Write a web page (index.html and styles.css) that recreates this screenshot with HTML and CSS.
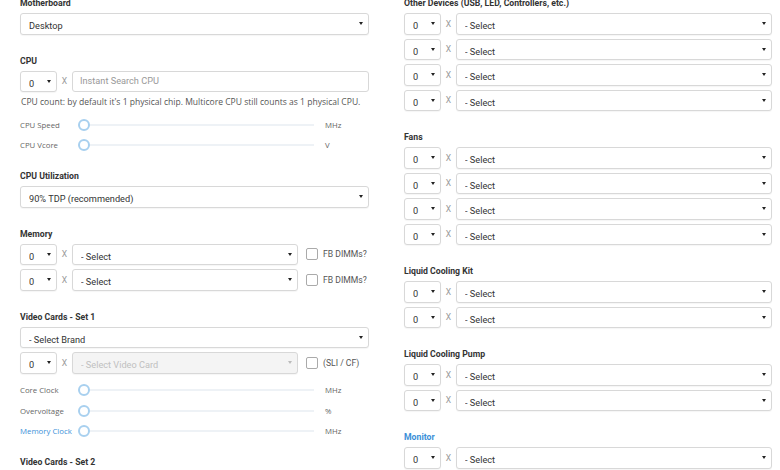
FILE: index.html
```html
<!DOCTYPE html>
<html lang="en">
<head>
  <meta charset="UTF-8">
  <title>PSU Calculator</title>
  <meta name="viewport" content="width=device-width, initial-scale=1.0">
  <link rel="stylesheet" href="styles.css">
</head>
<body>

  <div class="page">

    <div class="col col-left">

      <div class="section">
        <div class="label">Motherboard</div>
        <div class="sel"><select><option>Desktop</option></select></div>
      </div>

      <div class="section">
        <div class="label">CPU</div>
        <div class="row">
          <div class="sel qty"><select><option>0</option></select></div>
          <span class="x">X</span>
          <input class="search" type="text" placeholder="Instant Search CPU">
        </div>
        <p class="help">CPU count: by default it's 1 physical chip. Multicore CPU still counts as 1 physical CPU.</p>
        <div class="sliders">
          <div class="slider"><span class="s-label">CPU Speed</span><span class="track"><i class="knob"></i></span><span class="unit">MHz</span></div>
          <div class="slider"><span class="s-label">CPU Vcore</span><span class="track"><i class="knob"></i></span><span class="unit">V</span></div>
        </div>
      </div>

      <div class="section">
        <div class="label">CPU Utilization</div>
        <div class="sel"><select><option>90% TDP (recommended)</option></select></div>
      </div>

      <div class="section">
        <div class="label">Memory</div>
        <div class="row">
          <div class="sel qty"><select><option>0</option></select></div>
          <span class="x">X</span>
          <div class="sel grow"><select><option>- Select</option></select></div>
          <label class="check"><input type="checkbox"><span class="box"></span>FB DIMMs?</label>
        </div>
        <div class="row">
          <div class="sel qty"><select><option>0</option></select></div>
          <span class="x">X</span>
          <div class="sel grow"><select><option>- Select</option></select></div>
          <label class="check"><input type="checkbox"><span class="box"></span>FB DIMMs?</label>
        </div>
      </div>

      <div class="section">
        <div class="label">Video Cards - Set 1</div>
        <div class="row">
          <div class="sel grow"><select><option>- Select Brand</option></select></div>
        </div>
        <div class="row">
          <div class="sel qty"><select><option>0</option></select></div>
          <span class="x">X</span>
          <div class="sel grow disabled"><select disabled><option>- Select Video Card</option></select></div>
          <label class="check"><input type="checkbox"><span class="box"></span>(SLI / CF)</label>
        </div>
        <div class="sliders">
          <div class="slider"><span class="s-label">Core Clock</span><span class="track"><i class="knob"></i></span><span class="unit">MHz</span></div>
          <div class="slider"><span class="s-label">Overvoltage</span><span class="track"><i class="knob"></i></span><span class="unit">%</span></div>
          <div class="slider"><span class="s-label link">Memory Clock</span><span class="track"><i class="knob"></i></span><span class="unit">MHz</span></div>
        </div>
      </div>

      <div class="section">
        <div class="label">Video Cards - Set 2</div>
      </div>

    </div>

    <div class="col col-right">

      <div class="section">
        <div class="label">Other Devices (USB, LED, Controllers, etc.)</div>
        <div class="row"><div class="sel qty"><select><option>0</option></select></div><span class="x">X</span><div class="sel grow"><select><option>- Select</option></select></div></div>
        <div class="row"><div class="sel qty"><select><option>0</option></select></div><span class="x">X</span><div class="sel grow"><select><option>- Select</option></select></div></div>
        <div class="row"><div class="sel qty"><select><option>0</option></select></div><span class="x">X</span><div class="sel grow"><select><option>- Select</option></select></div></div>
        <div class="row"><div class="sel qty"><select><option>0</option></select></div><span class="x">X</span><div class="sel grow"><select><option>- Select</option></select></div></div>
      </div>

      <div class="section">
        <div class="label">Fans</div>
        <div class="row"><div class="sel qty"><select><option>0</option></select></div><span class="x">X</span><div class="sel grow"><select><option>- Select</option></select></div></div>
        <div class="row"><div class="sel qty"><select><option>0</option></select></div><span class="x">X</span><div class="sel grow"><select><option>- Select</option></select></div></div>
        <div class="row"><div class="sel qty"><select><option>0</option></select></div><span class="x">X</span><div class="sel grow"><select><option>- Select</option></select></div></div>
        <div class="row"><div class="sel qty"><select><option>0</option></select></div><span class="x">X</span><div class="sel grow"><select><option>- Select</option></select></div></div>
      </div>

      <div class="section">
        <div class="label">Liquid Cooling Kit</div>
        <div class="row"><div class="sel qty"><select><option>0</option></select></div><span class="x">X</span><div class="sel grow"><select><option>- Select</option></select></div></div>
        <div class="row"><div class="sel qty"><select><option>0</option></select></div><span class="x">X</span><div class="sel grow"><select><option>- Select</option></select></div></div>
      </div>

      <div class="section">
        <div class="label">Liquid Cooling Pump</div>
        <div class="row"><div class="sel qty"><select><option>0</option></select></div><span class="x">X</span><div class="sel grow"><select><option>- Select</option></select></div></div>
        <div class="row"><div class="sel qty"><select><option>0</option></select></div><span class="x">X</span><div class="sel grow"><select><option>- Select</option></select></div></div>
      </div>

      <div class="section">
        <div class="label link">Monitor</div>
        <div class="row"><div class="sel qty"><select><option>0</option></select></div><span class="x">X</span><div class="sel grow"><select><option>- Select</option></select></div></div>
      </div>

    </div>

  </div>

</body>
</html>
```

FILE: styles.css
```css
body {
  margin: 0;
  font-family: Roboto, "Liberation Sans", sans-serif;
  color: #333;
  background: #fff;
  overflow: hidden;
}

.page {
  display: flex;
  gap: 35px;
  padding-left: 20px;
  margin-top: -3px;
}

.col-left {
  width: 349px;
}

.col-right {
  width: 368px;
}

.section {
  margin-bottom: 20px;
}

.label {
  font-size: 8.7px;
  font-weight: bold;
  line-height: 12px;
  color: #333;
  margin-bottom: 4px;
}

.label.link,
.s-label.link {
  color: #3a8fd8;
}

.row {
  display: flex;
  align-items: center;
  height: 21.5px;
  margin-bottom: 4px;
}

.section .row:last-of-type {
  margin-bottom: 0;
}

.sel {
  position: relative;
  height: 21.5px;
  box-sizing: border-box;
  border: 1px solid #d8d8d8;
  border-radius: 3px;
  background: #fff;
  box-shadow: 0 1px 1px rgba(0,0,0,0.04);
}

.sel::after {
  content: "";
  position: absolute;
  right: 5px;
  top: 50%;
  margin-top: -1.5px;
  border-left: 2px solid transparent;
  border-right: 2px solid transparent;
  border-top: 3px solid #222;
}

.sel select {
  appearance: none;
  -webkit-appearance: none;
  width: 100%;
  height: 100%;
  border: none;
  background: transparent;
  font-family: Roboto, "Liberation Sans", sans-serif;
  font-size: 9.2px;
  color: #333;
  padding: 0 0 3px 8px;
  outline: none;
}

.sel.qty {
  width: 37px;
  flex: none;
}

.sel.grow {
  flex: 1;
}

.sel.disabled {
  background: #f4f4f4;
}

.sel.disabled::after {
  border-top-color: #bbb;
}

.sel.disabled select {
  color: #aaa;
}

.x {
  width: 15px;
  text-align: center;
  font-size: 8.5px;
  color: #999;
  flex: none;
}

.search {
  flex: 1;
  height: 21.5px;
  box-sizing: border-box;
  border: 1px solid #d8d8d8;
  border-radius: 3px;
  padding: 0 7px 1px;
  font-family: Roboto, "Liberation Sans", sans-serif;
  font-size: 9.2px;
  color: #333;
  outline: none;
}

.search::placeholder {
  color: #999;
}

.check {
  display: flex;
  align-items: center;
  width: 71px;
  flex: none;
  padding-left: 8px;
  box-sizing: border-box;
  font-size: 8.6px;
  color: #555;
}

.check input {
  display: none;
}

.check .box {
  width: 12px;
  height: 12px;
  box-sizing: border-box;
  border: 1px solid #aaa;
  border-radius: 2px;
  margin-right: 5px;
  background: #fff;
}

.help {
  margin: 4px 0 0;
  font-family: "Open Sans", sans-serif;
  font-size: 8.55px;
  line-height: 12px;
  color: #555;
  padding-left: 1px;
  white-space: nowrap;
}

.sliders {
  margin-top: 6.5px;
  margin-bottom: -5.5px;
}

.slider {
  display: flex;
  align-items: center;
  height: 20.5px;
}

.s-label {
  width: 58px;
  flex: none;
  font-family: "Open Sans", sans-serif;
  font-size: 7.8px;
  color: #666;
}

.track {
  position: relative;
  width: 236px;
  height: 2px;
  background: #eef2f6;
  margin-right: 11px;
}

.knob {
  position: absolute;
  left: 0;
  top: -5px;
  width: 12px;
  height: 12px;
  box-sizing: border-box;
  border: 2px solid #a8d0ef;
  border-radius: 50%;
  background: #fff;
}

.unit {
  font-family: "Open Sans", sans-serif;
  font-size: 7.8px;
  color: #666;
}
```
